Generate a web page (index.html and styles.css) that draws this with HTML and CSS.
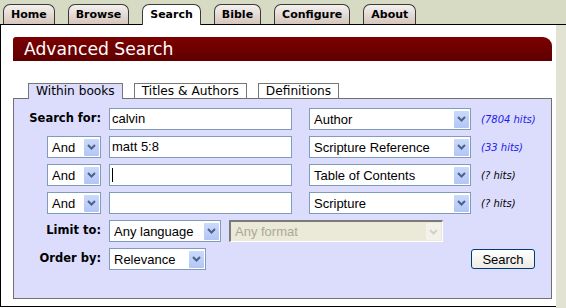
FILE: index.html
```html
<!DOCTYPE html>
<html lang="en">
<head>
    <meta charset="UTF-8">
    <title>Advanced Search</title>
    <link rel="stylesheet" href="styles.css">
</head>
<body>
    <div class="nav">
        <a class="tab">Home</a>
        <a class="tab">Browse</a>
        <a class="tab active">Search</a>
        <a class="tab">Bible</a>
        <a class="tab">Configure</a>
        <a class="tab">About</a>
    </div>
    <div class="frame">
        <div class="content">
            <div class="titlebar">Advanced Search</div>
            <div class="subtabs">
                <span class="subtab active">Within books</span>
                <span class="subtab">Titles &amp; Authors</span>
                <span class="subtab">Definitions</span>
            </div>
            <div class="panel">
                <div class="row">
                    <div class="label">Search for:</div>
                    <div class="field">calvin</div>
                    <div class="select scope"><span>Author</span><span class="btn"><svg width="9" height="6" viewBox="0 0 9 6"><path d="M1 1 L4.5 4.5 L8 1" fill="none" stroke="#4d6185" stroke-width="2"/></svg></span></div>
                    <span class="hits found">(7804 hits)</span>
                </div>
                <div class="row">
                    <div class="label"><div class="select op"><span>And</span><span class="btn"><svg width="9" height="6" viewBox="0 0 9 6"><path d="M1 1 L4.5 4.5 L8 1" fill="none" stroke="#4d6185" stroke-width="2"/></svg></span></div></div>
                    <div class="field">matt 5:8</div>
                    <div class="select scope"><span>Scripture Reference</span><span class="btn"><svg width="9" height="6" viewBox="0 0 9 6"><path d="M1 1 L4.5 4.5 L8 1" fill="none" stroke="#4d6185" stroke-width="2"/></svg></span></div>
                    <span class="hits found">(33 hits)</span>
                </div>
                <div class="row">
                    <div class="label"><div class="select op"><span>And</span><span class="btn"><svg width="9" height="6" viewBox="0 0 9 6"><path d="M1 1 L4.5 4.5 L8 1" fill="none" stroke="#4d6185" stroke-width="2"/></svg></span></div></div>
                    <div class="field"><span class="caret"></span></div>
                    <div class="select scope"><span>Table of Contents</span><span class="btn"><svg width="9" height="6" viewBox="0 0 9 6"><path d="M1 1 L4.5 4.5 L8 1" fill="none" stroke="#4d6185" stroke-width="2"/></svg></span></div>
                    <span class="hits">(? hits)</span>
                </div>
                <div class="row">
                    <div class="label"><div class="select op"><span>And</span><span class="btn"><svg width="9" height="6" viewBox="0 0 9 6"><path d="M1 1 L4.5 4.5 L8 1" fill="none" stroke="#4d6185" stroke-width="2"/></svg></span></div></div>
                    <div class="field"></div>
                    <div class="select scope"><span>Scripture</span><span class="btn"><svg width="9" height="6" viewBox="0 0 9 6"><path d="M1 1 L4.5 4.5 L8 1" fill="none" stroke="#4d6185" stroke-width="2"/></svg></span></div>
                    <span class="hits">(? hits)</span>
                </div>
                <div class="row">
                    <div class="label">Limit to:</div>
                    <div class="select lang"><span>Any language</span><span class="btn"><svg width="9" height="6" viewBox="0 0 9 6"><path d="M1 1 L4.5 4.5 L8 1" fill="none" stroke="#4d6185" stroke-width="2"/></svg></span></div>
                    <div class="select format disabled"><span>Any format</span><span class="btn"><svg width="9" height="6" viewBox="0 0 9 6"><path d="M1 1 L4.5 4.5 L8 1" fill="none" stroke="#d4d2c6" stroke-width="2"/></svg></span></div>
                </div>
                <div class="row">
                    <div class="label">Order by:</div>
                    <div class="select order"><span>Relevance</span><span class="btn"><svg width="9" height="6" viewBox="0 0 9 6"><path d="M1 1 L4.5 4.5 L8 1" fill="none" stroke="#4d6185" stroke-width="2"/></svg></span></div>
                    <button class="search-btn">Search</button>
                </div>
            </div>
        </div>
        <div class="rail"></div>
    </div>
</body>
</html>
```

FILE: styles.css
```css
/* Reset default styles */
* {
    margin: 0;
    padding: 0;
    box-sizing: border-box;
}
body {
    font-family: "DejaVu Sans", Verdana, sans-serif;
    background-color: #fff;
    color: #000;
    width: 566px;
    height: 308px;
    overflow: hidden;
}

/* Top navigation tabs */
.nav {
    height: 25px;
    background-color: #d7dbc3;
    border-bottom: 1px solid #000;
    display: flex;
    align-items: flex-end;
    gap: 13px;
    padding-left: 3px;
}
.tab {
    height: 20px;
    padding: 0 7px;
    border: 1px solid #3a3a3a;
    border-bottom: none;
    border-radius: 7px 7px 0 0;
    background: linear-gradient(#f4f1ee, #d5c5bd);
    font-size: 11px;
    font-weight: bold;
    line-height: 19px;
}
.tab.active {
    background: #fff;
    height: 21px;
    margin-bottom: -1px;
}

/* Page frame */
.frame {
    display: flex;
    height: 283px;
}
.content {
    width: 556px;
    height: 282px;
    border-left: 1px solid #000;
    border-bottom: 1px solid #000;
    padding: 12px 0 0 12px;
}
.rail {
    flex: 1;
    background-color: #e3e3d3;
}
.titlebar {
    width: 539px;
    height: 24px;
    padding-left: 11px;
    background: linear-gradient(#7c0000, #5f0000);
    border-radius: 3px 9px 0 0;
    color: #fff;
    font-size: 17.2px;
    line-height: 24px;
}

/* Search panel */
.subtabs {
    display: flex;
    gap: 11px;
    margin-top: 22px;
    padding-left: 15px;
}
.subtab {
    height: 15px;
    padding: 0 7px;
    border: 1px solid #777;
    border-bottom: none;
    background-color: #fff;
    font-size: 12.2px;
    line-height: 14px;
}
.subtab.active {
    position: relative;
    height: 16px;
    margin-bottom: -1px;
    background-color: #dcdcfc;
}
.panel {
    width: 539px;
    height: 201px;
    border: 1px solid #707070;
    background-color: #dcdcfc;
    padding-top: 9px;
    display: flex;
    flex-direction: column;
    gap: 6px;
}
.row {
    display: flex;
    align-items: center;
    height: 22px;
}
.label {
    width: 87px;
    margin-right: 8px;
    display: flex;
    justify-content: flex-end;
    font-size: 11.5px;
    font-weight: bold;
    padding-bottom: 3px;
}
.label .select {
    margin-bottom: -3px;
}
.field {
    width: 183px;
    height: 22px;
    margin-right: 17px;
    padding-left: 2px;
    border: 1px solid #7f9db9;
    background-color: #fff;
    font: 13px "Liberation Sans", Arial, sans-serif;
    line-height: 20px;
    display: flex;
    align-items: center;
}
.caret {
    width: 1px;
    height: 14px;
    background-color: #000;
}
.select {
    height: 22px;
    display: flex;
    align-items: center;
    justify-content: space-between;
    padding: 0 1px 0 4px;
    border: 1px solid #7f9db9;
    background-color: #fff;
    font: 13px "Liberation Sans", Arial, sans-serif;
    font-weight: normal;
}
.select .btn {
    width: 15px;
    height: 17px;
    display: flex;
    align-items: center;
    justify-content: center;
    border-radius: 1px;
    background: linear-gradient(#cbd9fc, #b2c6f5);
}
.select.op { width: 54px; }
.select.scope { width: 162px; }
.select.lang { width: 112px; margin-right: 8px; }
.select.format { width: 214px; }
.select.order { width: 97px; }
.select.disabled {
    background-color: #ebe9d8;
    color: #aca899;
    border-color: #7a7a7a #fff #fff #7a7a7a;
    border-width: 2px 1px 1px 2px;
}
.select.disabled .btn {
    background: #f2f1ea;
}
.hits {
    margin-left: 10px;
    font-size: 10px;
    font-style: italic;
}
.hits.found {
    color: #1a1aee;
}
.search-btn {
    margin-left: auto;
    margin-right: 16px;
    width: 64px;
    height: 20px;
    border: 1px solid #003c74;
    border-radius: 3px;
    background: linear-gradient(#fff, #ecebe5);
    font: 13px "Liberation Sans", Arial, sans-serif;
    color: #000;
}
```
